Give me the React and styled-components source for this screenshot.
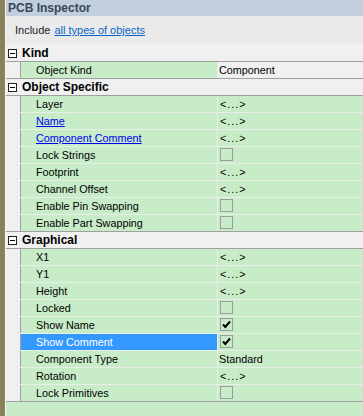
import React from "react";
import styled, { createGlobalStyle } from "styled-components";

const GlobalStyle = createGlobalStyle`
  html, body {
    margin: 0;
    padding: 0;
    background: #c8ecc8;
  }
  * {
    box-sizing: border-box;
  }
`;

const Frame = styled.div`
  display: flex;
  height: 416px;
  width: 363px;
  overflow: hidden;
  font-family: "Liberation Sans", Arial, sans-serif;
  font-size: 10.8px;
  color: #000;
`;

const Strip = styled.div`
  width: 5px;
  background: #878259;
`;

const Panel = styled.div`
  flex: 1;
  display: flex;
  flex-direction: column;
  border-left: 1px solid #f7f7f7;
  background: #c8ecc8;
`;

const TitleBar = styled.div`
  height: 16px;
  background: #c1cfdc;
  padding-left: 2px;
  font-weight: 700;
  font-size: 12px;
  line-height: 16px;
  color: #3a4756;
`;

const IncludeBar = styled.div`
  height: 28px;
  background: #eaeaea;
  padding: 7px 0 0 9px;
  font-size: 11px;
  line-height: 14px;
  color: #222;
`;

const IncludeLink = styled.a`
  color: #0a64c8;
  text-decoration: underline;
  margin-left: 4px;
`;

const Grid = styled.div`
  display: flex;
  flex-direction: column;
  border-bottom: 1px solid #a0a0a0;
`;

const HeaderRow = styled.div`
  height: 17px;
  display: flex;
  align-items: center;
  background: #f0f0f0;
  padding-left: 2px;
  border-top: 1px solid ${(p) => (p.$first ? "#f0f0f0" : "#a0a0a0")};
  font-weight: 700;
  font-size: 12px;
`;

const MinusBox = styled.span`
  width: 9px;
  height: 9px;
  border: 1px solid #222;
  background: #fff;
  margin-right: 5px;
  position: relative;
  &::after {
    content: "";
    position: absolute;
    left: 1px;
    right: 1px;
    top: 3px;
    height: 1px;
    background: #000;
  }
`;

const PropRow = styled.div`
  height: 17px;
  display: grid;
  grid-template-columns: 15px 197px 1fr;
  border-top: 1px solid ${(p) => (p.$strong ? "#a0a0a0" : "#e8efe8")};
`;

const Gutter = styled.div`
  background: #f0f0f0;
  border-right: 1px solid #a0a0a0;
`;

const NameCell = styled.div`
  background: ${(p) => (p.$selected ? "#3399ff" : "#c8ecc8")};
  color: ${(p) => (p.$selected ? "#fff" : "#000")};
  border-right: 1px solid #e8efe8;
  padding-left: 15px;
  line-height: 16px;
  white-space: nowrap;
`;

const NameLink = styled.span`
  color: #0000ee;
  text-decoration: underline;
`;

const ValueCell = styled.div`
  background: ${(p) => (p.$readonly ? "#f0f0f0" : "#c8ecc8")};
  padding-left: 1px;
  line-height: 16px;
  display: flex;
  align-items: flex-start;
`;

const Multi = styled.span`
  padding-left: 1px;
  letter-spacing: 1px;
`;

const Box = styled.span`
  width: 13px;
  height: 13px;
  margin: 1px 0 0 1px;
  border: 1px solid #9c9c9c;
  display: flex;
  align-items: center;
  justify-content: center;
`;

const Footer = styled.div`
  flex: 1;
  background: #c8ecc8;
`;

function Check({ on }) {
  return (
    <Box>
      {on && (
        <svg width="9" height="9" viewBox="0 0 9 9">
          <path d="M1 4.5 L3.3 7 L8 1.5" stroke="#000" strokeWidth="2" fill="none" />
        </svg>
      )}
    </Box>
  );
}

const groups = [
  {
    title: "Kind",
    rows: [{ name: "Object Kind", value: "Component", readonly: true }],
  },
  {
    title: "Object Specific",
    rows: [
      { name: "Layer", value: "multi" },
      { name: "Name", value: "multi", link: true },
      { name: "Component Comment", value: "multi", link: true },
      { name: "Lock Strings", value: "box" },
      { name: "Footprint", value: "multi" },
      { name: "Channel Offset", value: "multi" },
      { name: "Enable Pin Swapping", value: "box" },
      { name: "Enable Part Swapping", value: "box" },
    ],
  },
  {
    title: "Graphical",
    rows: [
      { name: "X1", value: "multi" },
      { name: "Y1", value: "multi" },
      { name: "Height", value: "multi" },
      { name: "Locked", value: "box" },
      { name: "Show Name", value: "checked" },
      { name: "Show Comment", value: "checked", selected: true },
      { name: "Component Type", value: "Standard" },
      { name: "Rotation", value: "multi" },
      { name: "Lock Primitives", value: "box" },
    ],
  },
];

function renderValue(v) {
  if (v === "multi") return <Multi>&lt;...&gt;</Multi>;
  if (v === "box") return <Check on={false} />;
  if (v === "checked") return <Check on />;
  return <span>{v}</span>;
}

export default function App() {
  return (
    <>
      <GlobalStyle />
      <Frame>
        <Strip />
        <Panel>
          <TitleBar>PCB Inspector</TitleBar>
          <IncludeBar>
            Include
            <IncludeLink>all types of objects</IncludeLink>
          </IncludeBar>
          <Grid>
            {groups.map((g, gi) => (
              <React.Fragment key={g.title}>
                <HeaderRow $first={gi === 0}>
                  <MinusBox />
                  {g.title}
                </HeaderRow>
                {g.rows.map((r, ri) => (
                  <PropRow key={r.name} $strong={ri === 0}>
                    <Gutter />
                    <NameCell $selected={r.selected}>
                      {r.link ? <NameLink>{r.name}</NameLink> : r.name}
                    </NameCell>
                    <ValueCell $readonly={r.readonly}>{renderValue(r.value)}</ValueCell>
                  </PropRow>
                ))}
              </React.Fragment>
            ))}
          </Grid>
          <Footer />
        </Panel>
      </Frame>
    </>
  );
}
